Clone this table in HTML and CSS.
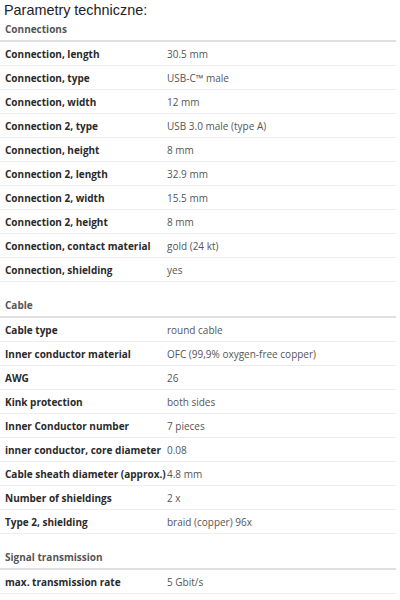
FILE: index.html
```html
<!DOCTYPE html>
<html>
<head>
<meta charset="utf-8">
<link rel="stylesheet" href="styles.css">
</head>
<body>
<div class="page">
  <h1 class="title">Parametry techniczne:</h1>

  <section class="group">
    <h2 class="group-head">Connections</h2>
    <div class="row"><span class="label">Connection, length</span><span class="value">30.5 mm</span></div>
    <div class="row"><span class="label">Connection, type</span><span class="value">USB-C™ male</span></div>
    <div class="row"><span class="label">Connection, width</span><span class="value">12 mm</span></div>
    <div class="row"><span class="label">Connection 2, type</span><span class="value">USB 3.0 male (type A)</span></div>
    <div class="row"><span class="label">Connection, height</span><span class="value">8 mm</span></div>
    <div class="row"><span class="label">Connection 2, length</span><span class="value">32.9 mm</span></div>
    <div class="row"><span class="label">Connection 2, width</span><span class="value">15.5 mm</span></div>
    <div class="row"><span class="label">Connection 2, height</span><span class="value">8 mm</span></div>
    <div class="row"><span class="label">Connection, contact material</span><span class="value">gold (24 kt)</span></div>
    <div class="row"><span class="label">Connection, shielding</span><span class="value">yes</span></div>
  </section>

  <section class="group">
    <h2 class="group-head">Cable</h2>
    <div class="row"><span class="label">Cable type</span><span class="value">round cable</span></div>
    <div class="row"><span class="label">Inner conductor material</span><span class="value">OFC (99,9% oxygen-free copper)</span></div>
    <div class="row"><span class="label">AWG</span><span class="value">26</span></div>
    <div class="row"><span class="label">Kink protection</span><span class="value">both sides</span></div>
    <div class="row"><span class="label">Inner Conductor number</span><span class="value">7 pieces</span></div>
    <div class="row"><span class="label">inner conductor, core diameter</span><span class="value">0.08</span></div>
    <div class="row"><span class="label">Cable sheath diameter (approx.)</span><span class="value">4.8 mm</span></div>
    <div class="row"><span class="label">Number of shieldings</span><span class="value">2 x</span></div>
    <div class="row"><span class="label">Type 2, shielding</span><span class="value">braid (copper) 96x</span></div>
  </section>

  <section class="group">
    <h2 class="group-head">Signal transmission</h2>
    <div class="row"><span class="label">max. transmission rate</span><span class="value">5 Gbit/s</span></div>
  </section>
</div>
</body>
</html>
```

FILE: styles.css
```css
html, body {
  margin: 0;
  padding: 0;
  background: #fff;
}

.page {
  width: 396px;
  font-family: "Open Sans", "DejaVu Sans", sans-serif;
}

.title {
  margin: 0;
  padding-left: 4px;
  height: 18px;
  font-family: "Liberation Sans", Arial, sans-serif;
  font-weight: normal;
  font-size: 14.4px;
  line-height: 20px;
  color: #222;
}

.group {
  display: flex;
  flex-direction: column;
}

.group + .group {
  margin-top: 12px;
}

.group-head {
  margin: 0;
  padding-left: 5px;
  height: 22px;
  line-height: 22px;
  font-size: 10px;
  font-weight: 700;
  color: #555;
  border-bottom: 2px solid #e0e0e0;
}

.row {
  display: grid;
  grid-template-columns: 167px 1fr;
  height: 23px;
  align-items: center;
  border-bottom: 1px solid #ededed;
  font-size: 10px;
}

.label {
  padding-left: 5px;
  font-weight: 700;
  color: #2a2a2a;
  white-space: nowrap;
}

.value {
  color: #555;
  white-space: nowrap;
}
```
